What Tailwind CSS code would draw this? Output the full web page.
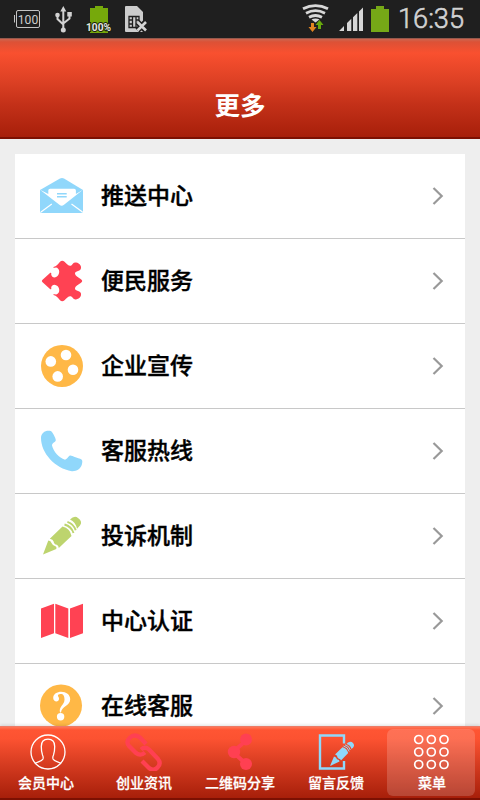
<!DOCTYPE html>
<html lang="zh-CN">
<head>
<meta charset="utf-8">
<title>更多</title>
<script src="https://cdn.jsdelivr.net/npm/@tailwindcss/browser@4"></script>
</head>
<body class="w-[480px] h-[800px] overflow-hidden bg-[#eee] flex flex-col font-['Noto_Sans_CJK_SC',sans-serif]">
<div class="h-[38px] shrink-0 bg-[#1f1f1f] flex justify-between">
  <svg width="160" height="38" viewBox="0 0 160 38">
    <rect x="16.500" y="10.500" width="23" height="17" rx="1.500" fill="none" stroke="#c4c4c4"/>
    <path d="M14.500 15v7.500" stroke="#c4c4c4"/>
    <text x="28" y="24" font-size="13" text-anchor="middle" textLength="20.500" lengthAdjust="spacingAndGlyphs" fill="#ccc" font-family="Roboto, sans-serif">100</text>
    <g fill="none" stroke="#d2d2d2" stroke-width="2"><path d="M63.300 10v20M57.500 15v4l5.800 5.500M69.500 15v3.500l-6.200 5"/></g>
    <path d="M63.300 6l3 5.500h-6zM67.300 12h4.500v4.500h-4.500z" fill="#d2d2d2"/><circle cx="57.500" cy="15" r="2.300" fill="#d2d2d2"/><circle cx="63.300" cy="30" r="2.500" fill="#d2d2d2"/>
    <path d="M90 8h5V6h8v2h5v25H90z" fill="#76a90b"/>
    <text x="98.500" y="31" font-size="10" font-weight="700" text-anchor="middle" textLength="25" lengthAdjust="spacingAndGlyphs" fill="#e4e4e4" stroke="#1b240a" stroke-width="2" paint-order="stroke" font-family="Roboto, sans-serif">100%</text>
    <path d="M125 7q0-1 1-1h11l6 6v20h-17q-1 0-1-1z" fill="#ccc"/>
    <path d="M129 16.500h10v11h-10zM132.500 16v12M136 16v12M129 20h3M129 24h3M136 20h3" fill="none" stroke="#1f1f1f" stroke-width="1.300"/>
    <path d="M137.500 22l8 8.500M145.500 22l-8 8.500" stroke="#1f1f1f" stroke-width="5.500"/><path d="M137.500 22l8.500 8.500M146 22l-8.500 8.500" stroke="#d4d4d4" stroke-width="2.600"/>
  </svg>
  <svg width="190" height="38" viewBox="290 0 190 38">
    <g fill="none" stroke="#d8d8d8" stroke-width="2.800"><path d="M303 8.800q12.500-6.500 25 0M306 13.200q9.500-5 19 0M309 17.200q6.500-3.400 13 0"/></g><path d="M311.500 19.500q4-2 8 0l-4 3z" fill="#d8d8d8"/>
    <path d="M311 23h3v4h2.500l-4 5-4-5h2.500z" fill="#e28420"/><path d="M318 29h3v-4h2.500l-4-5-4 5h2.500z" fill="#67a80d" stroke="#1f1f1f" stroke-width=".5" paint-order="stroke"/>
    <path d="M339 31l5-5v5zM347 23l4.300-4.300V31H347zM353 17.300l4.300-4.300V31H353zM359 11.500l4-4V31h-4z" fill="#d6d6d6"/>
    <path d="M371 9h5V6h8v3h5v23h-18z" fill="#76a817"/>
    <text x="398" y="28" font-size="27.500" textLength="66" lengthAdjust="spacingAndGlyphs" fill="#d2d2d2" font-family="Roboto, sans-serif" font-weight="300" stroke="#d2d2d2" stroke-width=".6">16:35</text>
  </svg>
</div>
<header class="h-[101px] shrink-0 border-t border-t-[#96594c] border-b-2 border-b-[#7c1002] bg-[linear-gradient(#cc6650_0px,#dc5136_3px,#f9502f_14px,#dc4024_43px,#c43119_65px,#a71f0a_98px)] flex justify-center pt-[47px]">
  <h1 class="text-[25.5px] leading-[36px] font-bold text-white">更多</h1>
</header>
<main class="grow min-h-0 overflow-hidden px-[15px] pt-[15px]">
  <ul class="bg-white text-[23px] font-medium text-black [-webkit-text-stroke:0.4px_#000]">
    <li class="h-[85px] border-b border-[#c8c8c8] flex items-center pl-[25px] pr-[21px]">
      <svg class="shrink-0" width="44" height="44" viewBox="0 0 44 44"><path d="M0 16L20 4.400q2-1 4 0L43 16v21q0 2-2 2H2q-2 0-2-2z" fill="#90d7fb"/><path d="M0 15.800L8.300 20v-3.500q0-1.800 1.800-1.800h24q1.800 0 1.800 1.800V20L43 15.800 24 30.800q-2.300 1.800-4.600 0z" fill="#fff"/><path d="M11.800 30L1 38M31.500 30L42.500 38" stroke="#fff" stroke-width="1.200"/><path d="M17 19.700h9.700M17 22.700h9.700" stroke="#90d7fb" stroke-width="1.500"/></svg>
      <span class="ml-[17px] grow leading-[34px] -mt-[4px]">推送中心</span>
      <svg width="12" height="18" viewBox="0 0 12 18" fill="none" stroke="#999" stroke-width="2.200"><path d="M1.500 1l8.200 8-8.200 8"/></svg>
    </li>
    <li class="h-[85px] border-b border-[#c8c8c8] flex items-center pl-[25px] pr-[21px]">
      <svg class="shrink-0" width="44" height="44" viewBox="0 0 44 44"><path d="M2.300 21L10 14C11.300 13.200 11.500 14 11.200 15.500 12 19.500 16.500 19 18.300 16 20.300 12.500 19 9 16 8.500 14 8.900 12.800 8.800 13.500 8 16.500 7.500 18 5 20 2.700 21.500 1.300 23 1.300 24.500 2.700 27 5.200 29 7.500 31.300 6.500 33 5.500 33 3.300 36 3.600 40 4 42.200 8 40.500 10.500 38.500 12.800 35 12 35 14.500 35 16.800 39 18.500 41.800 21Q42.600 22 41.800 23C39 25.500 35 27.200 35 29.500 35 32 38.500 31.200 40.500 33.500 42.200 36 40 40 36 40.400 33 40.700 33 38.500 31.300 37.500 29 36.500 27 38.800 24.500 41.300 23 42.700 21.500 42.700 20 41.300 18 39 16.500 36.500 13.500 36 12.800 35.200 14 35.100 16 35.500 19 35 20.300 31.500 18.300 28 16.500 25 12 24.500 11.200 28.500 11.500 30 11.300 30.800 10 30L2.300 23Q1.400 22 2.300 21z" fill="#ff4253"/></svg>
      <span class="ml-[17px] grow leading-[34px] -mt-[4px]">便民服务</span>
      <svg width="12" height="18" viewBox="0 0 12 18" fill="none" stroke="#999" stroke-width="2.200"><path d="M1.500 1l8.200 8-8.200 8"/></svg>
    </li>
    <li class="h-[85px] border-b border-[#c8c8c8] flex items-center pl-[25px] pr-[21px]">
      <svg class="shrink-0" width="44" height="44" viewBox="0 0 44 44"><circle cx="22" cy="22" r="21" fill="#ffb846"/><g fill="#fff"><circle cx="26" cy="11" r="5.300"/><circle cx="10.800" cy="17.400" r="5.300"/><circle cx="33" cy="25.800" r="5.300"/><circle cx="17.700" cy="32.400" r="5.300"/></g></svg>
      <span class="ml-[17px] grow leading-[34px] -mt-[4px]">企业宣传</span>
      <svg width="12" height="18" viewBox="0 0 12 18" fill="none" stroke="#999" stroke-width="2.200"><path d="M1.500 1l8.200 8-8.200 8"/></svg>
    </li>
    <li class="h-[85px] border-b border-[#c8c8c8] flex items-center pl-[25px] pr-[21px]">
      <svg class="shrink-0" width="44" height="44" viewBox="0 0 44 44"><path d="M1 9C1 4.500 4.500 1.800 8.500 1.800c1.800 0 2.800.3 3.800 1.700 1.500 2.200 3 5 3.500 7.500 0 2.200-3.800 2.600-3.800 5.500C13.500 22.500 19 29 25 30.700c2-.2 3-3 4.500-3.900 1.400-.7 3 .5 4.500 1 3 1 6 1.800 7.500 2.700 1.300 1 .8 3 .3 5.300-1 4-5.500 6.700-10 6.400C15 39.500 1 24 1 9z" fill="#90d7fb"/></svg>
      <span class="ml-[17px] grow leading-[34px] -mt-[4px]">客服热线</span>
      <svg width="12" height="18" viewBox="0 0 12 18" fill="none" stroke="#999" stroke-width="2.200"><path d="M1.500 1l8.200 8-8.200 8"/></svg>
    </li>
    <li class="h-[85px] border-b border-[#c8c8c8] flex items-center pl-[25px] pr-[21px]">
      <svg class="shrink-0" width="44" height="44" viewBox="0 0 44 44" fill="#bdd46e"><path d="M3 40.500L8.300 26.500Q11 26.500 11.500 29q1 2.500 4 3.300 1.500.7.800 2.700zM9.800 24.800L22.500 12.500q7.500 1.500 9 9.500L18.800 34q-.2-2.500-2-3.300-2.800-.2-3.200-3.200-.5-2.200-3.800-2.700z"/><path d="M30 5.500q4.500-4.500 8-1.500 5 3.500 2 7.500l-3 3.200q-1.500-6.800-7-9.200z"/><path d="M24.500 10.500q7 2 9 8.500M27.400 7.800q6.500 2.200 8.300 8.500" fill="none" stroke="#bdd46e" stroke-width="1.900"/></svg>
      <span class="ml-[17px] grow leading-[34px] -mt-[4px]">投诉机制</span>
      <svg width="12" height="18" viewBox="0 0 12 18" fill="none" stroke="#999" stroke-width="2.200"><path d="M1.500 1l8.200 8-8.200 8"/></svg>
    </li>
    <li class="h-[85px] border-b border-[#c8c8c8] flex items-center pl-[25px] pr-[21px]">
      <svg class="shrink-0" width="44" height="44" viewBox="0 0 44 44"><path d="M1 9.500l13-4.800v29.600L1 39zM15.300 4.700l13 4.800V39l-13-4.700zM30 9.500l13-4.800v29.600L30 39z" fill="#ff4253"/></svg>
      <span class="ml-[17px] grow leading-[34px] -mt-[4px]">中心认证</span>
      <svg width="12" height="18" viewBox="0 0 12 18" fill="none" stroke="#999" stroke-width="2.200"><path d="M1.500 1l8.200 8-8.200 8"/></svg>
    </li>
    <li class="h-[85px] border-b border-[#c8c8c8] flex items-center pl-[25px] pr-[21px]">
      <svg class="shrink-0" width="44" height="44" viewBox="0 0 44 44"><circle cx="21" cy="21.500" r="21" fill="#ffb846"/><path d="M20 28.500c-1.500-6 4.500-7.500 4.500-13 0-3.500-1-5.500-4-5.500-1.500 0-3 .7-2.500 2 .5 1.200 1 1.500 1 2.700 0 4-5.800 3.500-5.800-.7 0-4 4-6.200 8-6.200 5 0 9 2.900 9 7.500 0 6.700-8.700 7-9.200 13.200z" fill="#fff"/><circle cx="20.600" cy="32.700" r="3.700" fill="#fff"/></svg>
      <span class="ml-[17px] grow leading-[34px] -mt-[4px]">在线客服</span>
      <svg width="12" height="18" viewBox="0 0 12 18" fill="none" stroke="#999" stroke-width="2.200"><path d="M1.500 1l8.200 8-8.200 8"/></svg>
    </li>
  </ul>
</main>
<nav class="h-[74px] shrink-0 relative border-t border-[#ed7b66] border-b-2 border-b-[#7c1002] bg-[linear-gradient(#ff7657_0px,#ff5533_3px,#fc5231_12px,#d53b20_38px,#a71f0a_71px)] shadow-[0_-1px_3px_rgba(0,0,0,0.12)] grid grid-cols-5 text-[14px] font-medium text-white [-webkit-text-stroke:0.25px_#fff]">
  <a class="flex flex-col items-center pt-[6px] pr-1">
    <svg class="ml-[4px]" width="38" height="38" viewBox="0 0 38 38" fill="none" stroke="#fff" stroke-width="1.300"><circle cx="19" cy="19" r="17"/><path d="M6 30.500c2-2 6.500-1.500 8-4.500.6-1.500.3-2.500-.5-4-1.200-3-1.200-5-1.200-8.500 0-5 2-7.300 6.700-7.300s6.700 2.300 6.700 7.300c0 3.500 0 5.500-1.200 8.500-.8 1.500-1.100 2.500-.5 4 1.500 3 6 2.500 8 4.500"/></svg>
    <span class="leading-[20px] mt-[1px]">会员中心</span>
  </a>
  <a class="flex flex-col items-center pt-[6px]">
    <svg width="38" height="38" viewBox="0 0 38 38" fill="none" stroke="#ff4052" stroke-width="4.300" stroke-linejoin="round"><path d="M21 11L15 4.500Q9.500.5 5 4.500T4 13l7 7q4.500 3.500 9-.500"/><path d="M16 16.500q4-3.500 8 0l9 9.500q3.500 4.500-.5 8.500t-8.500.5L17 28"/></svg>
    <span class="leading-[20px] mt-[1px]">创业资讯</span>
  </a>
  <a class="flex flex-col items-center pt-[6px]">
    <svg width="38" height="38" viewBox="0 0 38 38"><path d="M25 7.500L12 19l13 12" fill="none" stroke="#ff4052" stroke-width="4"/><g fill="#ff4052"><circle cx="25" cy="6.500" r="6"/><circle cx="13" cy="19" r="6.200"/><circle cx="25" cy="31" r="6"/></g></svg>
    <span class="leading-[20px] mt-[1px]">二维码分享</span>
  </a>
  <a class="flex flex-col items-center pt-[6px]">
    <svg width="38" height="38" viewBox="0 0 38 38"><path d="M27 10.500V2.500H3v33h24V28" fill="none" stroke="#8fd8fb" stroke-width="2.400"/><g fill="#8fd8fb"><path d="M13 33l4-9.500 2 1q.5 2 3 2.500l.5 1.500zM18 21.500l7.500-7.200q4.500 1 5.700 5.800L24 27.500q-.5-1.500-2-1.700-1.500-.3-1.700-2-.3-1.700-2.300-2.300zM31 9.500q3-1.700 5 .5t.2 4.500L34.500 16q-1-4-5-5z"/></g><path d="M26.500 13q4.500 1 5.700 5.500M28 11.800q4.300 1 5.300 5.200" fill="none" stroke="#8fd8fb" stroke-width="1"/></svg>
    <span class="leading-[20px] mt-[1px]">留言反馈</span>
  </a>
  <a class="ml-[3px] mr-[5px] mt-[2px] h-[67px] rounded-[6px] bg-white/17 flex flex-col items-center pt-[4px]">
    <svg width="38" height="38" viewBox="0 0 38 38" fill="none" stroke="#fff" stroke-width="1.700"><circle cx="6.700" cy="6.500" r="4"/><circle cx="19.300" cy="6.500" r="4"/><circle cx="32" cy="6.500" r="4"/><circle cx="6.700" cy="19" r="4"/><circle cx="19.300" cy="19" r="4"/><circle cx="32" cy="19" r="4"/><circle cx="6.700" cy="31.500" r="4"/><circle cx="19.300" cy="31.500" r="4"/><circle cx="32" cy="31.500" r="4"/></svg>
    <span class="leading-[20px] mt-[1px] ml-[2px]">菜单</span>
  </a>
</nav>
</body>
</html>
